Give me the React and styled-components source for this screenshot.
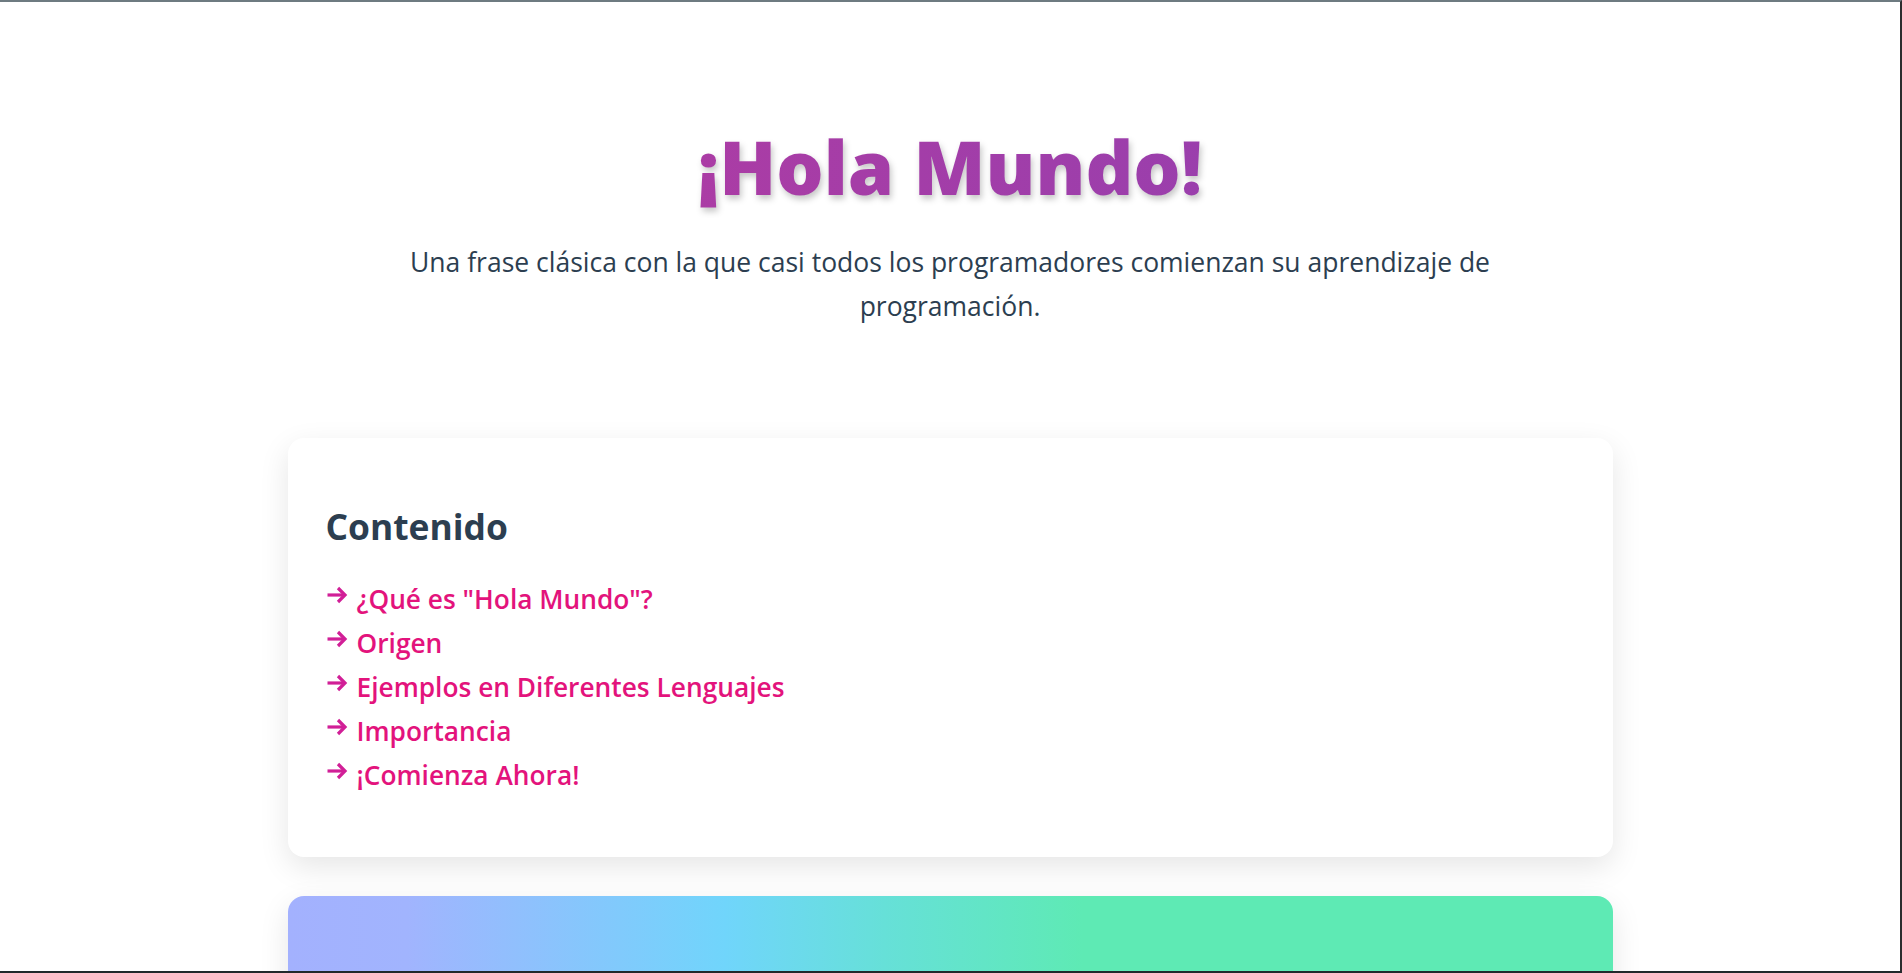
import React from 'react';
import styled, { createGlobalStyle } from 'styled-components';

const GlobalStyle = createGlobalStyle`
  * {
    box-sizing: border-box;
  }
  body {
    margin: 0;
    background: #ffffff;
    color: #2c3e50;
    font-family: 'Open Sans', 'Noto Sans', sans-serif;
    line-height: 1.8;
  }
`;

const Frame = styled.div`
  height: 100vh;
  overflow: hidden;
  border-top: 2px solid #6e7b81;
  border-right: 2px solid #2b2d2e;
  border-bottom: 2px solid #22292b;
  background: #ffffff;
`;

const Hero = styled.header`
  text-align: center;
  padding: 120px 2rem 110px;
`;

const Title = styled.h1`
  margin: 0;
  font-size: 74.5px;
  font-weight: 800;
  line-height: 1.2;
  background: linear-gradient(90deg, #c2399d 0%, #a53da7 45%, #8642b6 100%);
  -webkit-background-clip: text;
  background-clip: text;
  color: transparent;
  filter: drop-shadow(2px 4px 3px rgba(0, 0, 0, 0.22));
`;

const Subtitle = styled.p`
  margin: 29px auto 0;
  max-width: 1120px;
  font-size: 26.5px;
  line-height: 44px;
  color: #2c3e50;
`;

const Main = styled.main`
  width: 1325px;
  margin: 0 auto;
  display: flex;
  flex-direction: column;
  gap: 39px;
`;

const Card = styled.section`
  border-radius: 16px;
  padding: 40px 38px;
  background: ${({ gradient }) =>
    gradient
      ? 'linear-gradient(90deg, #a3b1fe 0%, #a1b4fe 9%, #70d5fb 33%, #66e0d8 45%, #5eeab4 60%, #5eeab4 100%)'
      : '#ffffff'};
  box-shadow: 0 10px 30px rgba(0, 0, 0, 0.1);
`;

const CardTitle = styled.h2`
  margin: 27px 0 0;
  font-size: 35.4px;
  font-weight: 700;
  line-height: 1.2;
  color: #2c3e50;
`;

const Toc = styled.ul`
  list-style: none;
  margin: 29px 0 20px;
  padding: 0;
`;

const TocItem = styled.li`
  display: flex;
  align-items: center;
  font-size: 26.3px;
  line-height: 44px;
  font-weight: 600;
`;

const Arrow = styled.svg`
  flex: none;
  width: 22px;
  height: 18px;
  margin: 0 9px 7px 0;
  color: #d11f97;
`;

const TocLink = styled.a`
  color: #e3137c;
  text-decoration: none;
`;

const ArrowIcon = () => (
  <Arrow viewBox="0 0 22 18" fill="none" stroke="currentColor" strokeWidth="3.2" aria-hidden="true">
    <path d="M1.5 9H19" />
    <path d="M12 2l7 7-7 7" strokeLinejoin="miter" />
  </Arrow>
);

const sections = [
  { id: 'que-es', label: '¿Qué es "Hola Mundo"?' },
  { id: 'origen', label: 'Origen' },
  { id: 'ejemplos', label: 'Ejemplos en Diferentes Lenguajes' },
  { id: 'importancia', label: 'Importancia' },
  { id: 'comienza', label: '¡Comienza Ahora!' },
];

export default function App() {
  return (
    <>
      <GlobalStyle />
      <Frame>
        <Hero>
          <Title>¡Hola Mundo!</Title>
          <Subtitle>
            Una frase clásica con la que casi todos los programadores comienzan su aprendizaje de programación.
          </Subtitle>
        </Hero>
        <Main>
          <Card>
            <CardTitle>Contenido</CardTitle>
            <Toc>
              {sections.map((s) => (
                <TocItem key={s.id}>
                  <ArrowIcon />
                  <TocLink href={`#${s.id}`}>{s.label}</TocLink>
                </TocItem>
              ))}
            </Toc>
          </Card>
          <Card gradient id="que-es">
            <CardTitle>¿Qué es "Hola Mundo"?</CardTitle>
          </Card>
        </Main>
      </Frame>
    </>
  );
}
